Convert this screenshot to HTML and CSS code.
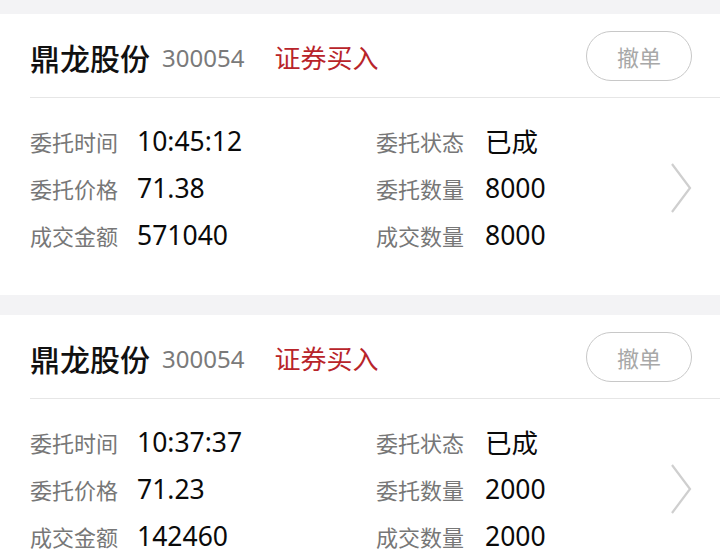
FILE: index.html
```html
<!DOCTYPE html>
<html lang="zh-CN">
<head>
  <meta charset="UTF-8">
  <title>委托查询</title>
  <meta name="viewport" content="width=device-width, initial-scale=1.0"/>
  <link rel="stylesheet" href="styles.css">
</head>
<body>

<!-- 委托 1 -->
<div class="order">
  <div class="order-head">
    <span class="stock-name">鼎龙股份</span>
    <span class="stock-code">300054</span>
    <span class="order-type">证券买入</span>
    <button class="cancel-btn">撤单</button>
  </div>
  <div class="order-body">
    <div class="fields">
      <div class="field"><span class="label">委托时间</span><span class="value">10:45:12</span></div>
      <div class="field"><span class="label">委托状态</span><span class="value">已成</span></div>
      <div class="field"><span class="label">委托价格</span><span class="value">71.38</span></div>
      <div class="field"><span class="label">委托数量</span><span class="value">8000</span></div>
      <div class="field"><span class="label">成交金额</span><span class="value">571040</span></div>
      <div class="field"><span class="label">成交数量</span><span class="value">8000</span></div>
    </div>
    <svg class="chevron" width="22" height="52" viewBox="0 0 22 52">
      <polyline points="2,2 20,26 2,50" fill="none" stroke="#cfcfcf" stroke-width="2.2"/>
    </svg>
  </div>
</div>

<!-- 委托 2 -->
<div class="order">
  <div class="order-head">
    <span class="stock-name">鼎龙股份</span>
    <span class="stock-code">300054</span>
    <span class="order-type">证券买入</span>
    <button class="cancel-btn">撤单</button>
  </div>
  <div class="order-body">
    <div class="fields">
      <div class="field"><span class="label">委托时间</span><span class="value">10:37:37</span></div>
      <div class="field"><span class="label">委托状态</span><span class="value">已成</span></div>
      <div class="field"><span class="label">委托价格</span><span class="value">71.23</span></div>
      <div class="field"><span class="label">委托数量</span><span class="value">2000</span></div>
      <div class="field"><span class="label">成交金额</span><span class="value">142460</span></div>
      <div class="field"><span class="label">成交数量</span><span class="value">2000</span></div>
    </div>
    <svg class="chevron" width="22" height="52" viewBox="0 0 22 52">
      <polyline points="2,2 20,26 2,50" fill="none" stroke="#cfcfcf" stroke-width="2.2"/>
    </svg>
  </div>
</div>

</body>
</html>
```

FILE: styles.css
```css
body {
  font-family: "Noto Sans", "Noto Sans CJK SC", sans-serif;
  background: #f3f3f5;
  margin: 0;
  padding: 14px 0 0;
  color: #111;
}

.order {
  background: white;
  padding-left: 30px;
  margin-bottom: 20px;
}

.order-head {
  display: flex;
  align-items: center;
  height: 83px;
  padding-right: 28px;
  border-bottom: 1px solid #e6e6e6;
}

.stock-name {
  font-size: 30px;
  font-weight: 500;
  color: #111;
  margin-top: 2px;
}

.stock-code {
  font-size: 24px;
  color: #7a7a7a;
  margin-left: 12px;
  margin-top: 4px;
}

.order-type {
  font-size: 26px;
  color: #b8242a;
  margin-left: 30px;
  margin-top: 2px;
}

.cancel-btn {
  margin-left: auto;
  width: 106px;
  height: 50px;
  border: 1px solid #c8c8c8;
  border-radius: 25px;
  background: white;
  color: #a8a8a8;
  font-family: inherit;
  font-size: 22px;
  padding: 0;
}

.order-body {
  display: flex;
  align-items: center;
  padding: 19px 28px 37px 0;
}

.fields {
  flex: 1;
  display: grid;
  grid-template-columns: 346px 1fr;
}

.field {
  display: flex;
  align-items: center;
  height: 47px;
}

.label {
  font-size: 22px;
  color: #777;
  width: 107px;
  flex-shrink: 0;
}

.field:nth-child(even) .label {
  width: 109px;
}

.value {
  font-size: 26.5px;
  color: #0a0a0a;
}

.chevron {
  display: block;
}
```
